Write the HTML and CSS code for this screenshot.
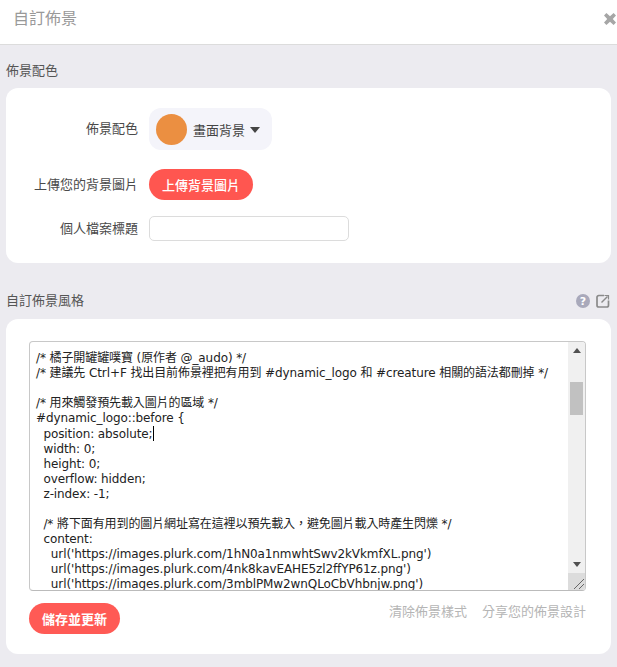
FILE: index.html
```html
<!DOCTYPE html>
<html lang="zh-Hant">
<head>
<meta charset="utf-8">
<title>自訂佈景</title>
<link rel="stylesheet" href="styles.css">
</head>
<body>
<header class="top">
  <h1 class="top-title">自訂佈景</h1>
  <svg class="close" width="12" height="12" viewBox="0 0 13 13"><path d="M2.600 0 6.500 3.500 10.400 0 13 2.600 9.500 6.500 13 10.400 10.400 13 6.500 9.500 2.600 13 0 10.400 3.500 6.500 0 2.600Z" fill="#a6a6a6"/></svg>
</header>
<main class="content">
  <h2 class="section-title">佈景配色</h2>
  <section class="card card-form">
    <div class="row row-select">
      <label class="row-label">佈景配色</label>
      <div class="select"><span class="swatch"></span><span class="select-text">畫面背景</span><span class="caret"></span></div>
    </div>
    <div class="row row-upload">
      <label class="row-label">上傳您的背景圖片</label>
      <button class="btn btn-upload">上傳背景圖片</button>
    </div>
    <div class="row row-input">
      <label class="row-label">個人檔案標題</label>
      <div class="input"></div>
    </div>
  </section>
  <div class="section-head">
    <h2 class="section-title">自訂佈景風格</h2>
    <div class="head-icons">
      <svg width="14" height="14" viewBox="0 0 14 14"><circle cx="7" cy="7" r="7" fill="#a9a9bb"/><text x="7" y="11" text-anchor="middle" class="q">?</text></svg>
      <svg width="14" height="14" viewBox="0 0 14 14" fill="none" stroke="#8a8a8a" stroke-width="1.700"><path d="M8 1.500H2.800A1.800 1.800 0 0 0 1 3.300v7.900A1.800 1.800 0 0 0 2.800 13h7.900a1.800 1.800 0 0 0 1.800-1.800V6.500"/><path d="M5.500 8.500 11.500 2.500" stroke-width="1.500"/><path d="M8.500 1.500H12.500V5.500" stroke-width="1.200"/></svg>
    </div>
  </div>
  <section class="card card-editor">
    <div class="editor">
      <pre class="code">/* 橘子開罐罐噗寶 (原作者 @_audo) */
/* 建議先 Ctrl+F 找出目前佈景裡把有用到 #dynamic_logo 和 #creature 相關的語法都刪掉 */

/* 用來觸發預先載入圖片的區域 */
#dynamic_logo::before {
  position: absolute;<span class="cursor"></span>
  width: 0;
  height: 0;
  overflow: hidden;
  z-index: -1;

  /* 將下面有用到的圖片網址寫在這裡以預先載入，避免圖片載入時產生閃爍 */
  content:
    url('https://images.plurk.com/1hN0a1nmwhtSwv2kVkmfXL.png')
    url('https://images.plurk.com/4nk8kavEAHE5zl2ffYP61z.png')
    url('https://images.plurk.com/3mblPMw2wnQLoCbVhbnjw.png')</pre>
      <div class="scrollbar">
        <div class="arrow arrow-up"></div>
        <div class="track"><div class="thumb"></div></div>
        <div class="arrow arrow-down"></div>
        <div class="grip"><svg width="17" height="17" viewBox="0 0 17 17" fill="none" stroke="#666" stroke-width="1"><path d="M6 16 16 6M11 16 16 11"/></svg></div>
      </div>
    </div>
    <div class="actions">
      <button class="btn btn-save">儲存並更新</button>
      <div class="links"><a class="link">清除佈景樣式</a><a class="link">分享您的佈景設計</a></div>
    </div>
  </section>
</main>
</body>
</html>
```
FILE: styles.css
```css
* { box-sizing: border-box; }
html, body { margin: 0; padding: 0; }
body {
  width: 617px;
  height: 667px;
  overflow: hidden;
  background: #ecebf0;
  font-family: "DejaVu Sans", "Noto Sans CJK TC", sans-serif;
  color: #444;
}
.top {
  height: 45px;
  background: #fff;
  border-bottom: 1px solid #dcdcdc;
  display: flex;
  align-items: center;
  justify-content: space-between;
  padding: 0 0 6px 13px;
}
.top-title { margin: 0; font-size: 16px; font-weight: 400; color: #999; line-height: 22px; }
.close { margin-right: 1px; }
.content { padding: 0 6px; }
.section-title { margin: 0; font-size: 13px; font-weight: 400; color: #555; line-height: 16px; }
.content > .section-title { padding-top: 18px; height: 43px; }
.card { background: #fff; border-radius: 12px; }
.card-form { height: 175px; padding-top: 20px; }
.row { display: flex; align-items: center; gap: 11px; }
.row-label { width: 132px; text-align: right; font-size: 13px; color: #4a4a4a; padding-bottom: 3px; }
.select {
  width: 123px; height: 42px; border-radius: 12px; background: #f4f4fa;
  display: flex; align-items: center; padding-left: 7px;
}
.swatch { width: 31px; height: 31px; border-radius: 50%; background: #eb8f41; margin-right: 6px; }
.select-text { font-size: 13px; color: #444; }
.caret { margin-left: 5px; margin-top: 1px; border: 5px solid transparent; border-top: 6px solid #444; border-bottom: 0; }
.row-upload { margin-top: 19px; }
.btn {
  border: 0; height: 31px; padding: 0; border-radius: 16px;
  background: #ff5650; color: #fff; font: 500 13px "DejaVu Sans", "Noto Sans CJK TC", sans-serif;
}
.btn-upload { width: 104px; }
.row-input { margin-top: 16px; }
.input { width: 200px; height: 25px; border: 1px solid #dcdcdc; border-radius: 5px; background: #fff; }
.section-head {
  display: flex; justify-content: space-between; align-items: center;
  height: 56px; padding: 20px 1px 0 0;
}
.head-icons { display: flex; gap: 6px; }
.q { font: 700 11px "DejaVu Sans", sans-serif; fill: #fff; }
.card-editor { height: 335px; padding: 22px 25px 0 23px; }
.editor {
  display: flex; height: 250px; border: 1px solid #c8c8c8; border-bottom-color: #bbb; border-radius: 4px; overflow: hidden; background: #fff;
}
.code {
  flex: 1; margin: 0; padding: 9px 0 0 6px; overflow: hidden;
  font: 12px/15px "DejaVu Sans", "Noto Sans CJK TC", sans-serif; letter-spacing: -0.1px; color: #222; white-space: pre;
}
.cursor { display: inline-block; width: 1px; height: 15px; background: #000; vertical-align: -3px; }
.scrollbar { width: 17px; background: #f0f0f0; display: flex; flex-direction: column; flex: none; }
.arrow { height: 17px; display: flex; align-items: center; justify-content: center; }
.arrow::before { content: ""; border: 4px solid transparent; }
.arrow-up::before { border-bottom: 5px solid #505050; border-top: 0; }
.arrow-down::before { border-top: 5px solid #505050; border-bottom: 0; }
.track { flex: 1; padding-top: 23px; }
.thumb { height: 33px; margin: 0 2px; background: #c1c1c1; }
.grip { height: 17px; background: #dcdcdc; }
.grip svg { display: block; }
.actions { display: flex; align-items: flex-start; justify-content: space-between; padding-top: 12px; }
.btn-save { width: 91px; height: 31px; font-weight: 700; background: #ff5a55; }
.links { display: flex; gap: 15px; padding-top: 1px; }
.link { font-size: 13px; line-height: 16px; color: #b5b5b5; }
```
